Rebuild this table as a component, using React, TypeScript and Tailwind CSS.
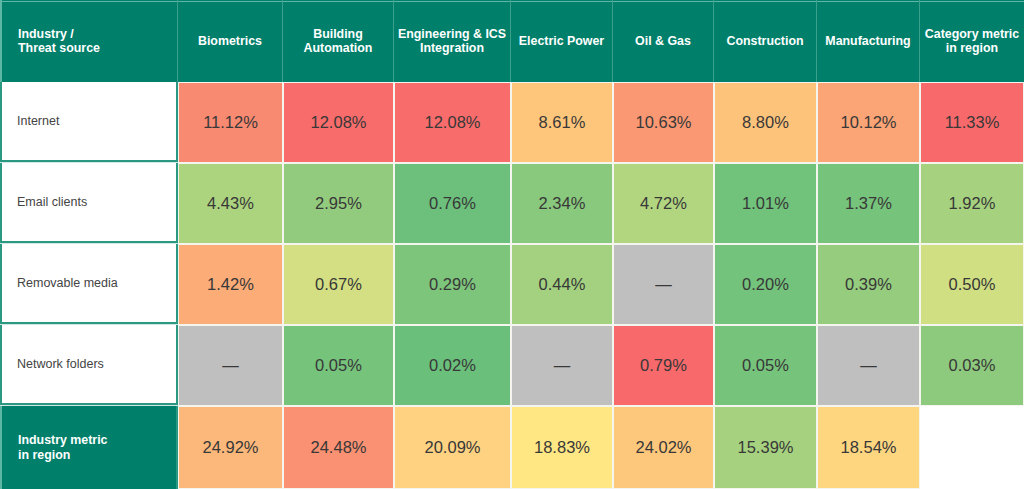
import React from "react";

type Cell = { v: string; bg: string };

const columns = [
  { label: "Biometrics", w: "w-[105px]" },
  { label: "Building\nAutomation", w: "w-[111px]" },
  { label: "Engineering & ICS\nIntegration", w: "w-[117px]" },
  { label: "Electric Power", w: "w-[102px]" },
  { label: "Oil & Gas", w: "w-[101px]" },
  { label: "Construction", w: "w-[103px]" },
  { label: "Manufacturing", w: "w-[103px]" },
  { label: "Category metric\nin region", w: "w-[104px]" },
];

const GRAY = "bg-[#bfbfbf]";

const rows: { label: string; cells: Cell[] }[] = [
  {
    label: "Internet",
    cells: [
      { v: "11.12%", bg: "bg-[#f98a72]" },
      { v: "12.08%", bg: "bg-[#f86c6b]" },
      { v: "12.08%", bg: "bg-[#f86c6b]" },
      { v: "8.61%", bg: "bg-[#fec67b]" },
      { v: "10.63%", bg: "bg-[#fa9874]" },
      { v: "8.80%", bg: "bg-[#fec37a]" },
      { v: "10.12%", bg: "bg-[#fba475]" },
      { v: "11.33%", bg: "bg-[#f8696b]" },
    ],
  },
  {
    label: "Email clients",
    cells: [
      { v: "4.43%", bg: "bg-[#acd47f]" },
      { v: "2.95%", bg: "bg-[#93cb7e]" },
      { v: "0.76%", bg: "bg-[#6cc07b]" },
      { v: "2.34%", bg: "bg-[#89c97d]" },
      { v: "4.72%", bg: "bg-[#b2d680]" },
      { v: "1.01%", bg: "bg-[#71c27b]" },
      { v: "1.37%", bg: "bg-[#76c37c]" },
      { v: "1.92%", bg: "bg-[#a6d27f]" },
    ],
  },
  {
    label: "Removable media",
    cells: [
      { v: "1.42%", bg: "bg-[#fcac77]" },
      { v: "0.67%", bg: "bg-[#d3df82]" },
      { v: "0.29%", bg: "bg-[#7ec57c]" },
      { v: "0.44%", bg: "bg-[#a3d17f]" },
      { v: "—", bg: GRAY },
      { v: "0.20%", bg: "bg-[#74c37c]" },
      { v: "0.39%", bg: "bg-[#95cc7e]" },
      { v: "0.50%", bg: "bg-[#d0df82]" },
    ],
  },
  {
    label: "Network folders",
    cells: [
      { v: "—", bg: GRAY },
      { v: "0.05%", bg: "bg-[#76c37c]" },
      { v: "0.02%", bg: "bg-[#6abf7b]" },
      { v: "—", bg: GRAY },
      { v: "0.79%", bg: "bg-[#f8696b]" },
      { v: "0.05%", bg: "bg-[#76c37c]" },
      { v: "—", bg: GRAY },
      { v: "0.03%", bg: "bg-[#8dca7d]" },
    ],
  },
];

const totals: Cell[] = [
  { v: "24.92%", bg: "bg-[#fcb87a]" },
  { v: "24.48%", bg: "bg-[#fa9172]" },
  { v: "20.09%", bg: "bg-[#fed280]" },
  { v: "18.83%", bg: "bg-[#ffe784]" },
  { v: "24.02%", bg: "bg-[#fdc77c]" },
  { v: "15.39%", bg: "bg-[#a6d27f]" },
  { v: "18.54%", bg: "bg-[#fed680]" },
];

const font = { fontFamily: '"Liberation Sans", Arial, sans-serif' };

const ValueCell = ({ cell, w }: { cell: Cell; w: string }) => (
  <div
    className={`${w} ${cell.bg} h-full flex items-center justify-center border border-[#f5f5f0] text-[16.5px] text-[#383838]`}
  >
    {cell.v}
  </div>
);

export default function App() {
  return (
    <div className="w-[1024px] h-[489px] bg-white overflow-hidden" style={font}>
      {/* header row */}
      <div className="flex h-[82px] bg-[#00806b] shadow-[inset_0_1px_0_#00806b,inset_0_2px_0_#5eb6a5]">
        <div className="w-[178px] h-full flex items-center pl-[16px] border-l-2 border-l-[#5eb6a5] border-r border-r-[#3a9f8c] text-white font-bold text-[12.4px] leading-[14.5px]">
          <span>
            Industry /
            <br />
            Threat source
          </span>
        </div>
        {columns.map((c) => (
          <div
            key={c.label}
            className={`${c.w} h-full flex items-center justify-center border-r border-r-[#3a9f8c] last:border-r-0 text-white font-bold text-[12.4px] leading-[14.5px] text-center whitespace-pre-line`}
          >
            {c.label}
          </div>
        ))}
      </div>

      {/* data rows */}
      {rows.map((r) => (
        <div key={r.label} className="flex h-[81px]">
          <div className="w-[178px] h-full bg-[#cfe8e2] pb-px">
            <div className="w-full h-full bg-white border-x-2 border-b-2 border-[#2b9882] flex items-center pl-[15px] text-[12.5px] text-[#444]">
              {r.label}
            </div>
          </div>
          {r.cells.map((cell, i) => (
            <ValueCell key={i} cell={cell} w={columns[i].w} />
          ))}
        </div>
      ))}

      {/* totals row */}
      <div className="flex h-[83px]">
        <div className="w-[178px] h-full bg-[#00806b] border-l-2 border-l-[#5eb6a5] border-r-2 border-r-[#2b9882] flex items-center pl-[16px] text-white font-bold text-[12.4px] leading-[14.5px]">
          <span>
            Industry metric
            <br />
            in region
          </span>
        </div>
        {totals.map((cell, i) => (
          <ValueCell key={i} cell={cell} w={columns[i].w} />
        ))}
        <div className="w-[104px] h-full bg-white" />
      </div>
    </div>
  );
}
